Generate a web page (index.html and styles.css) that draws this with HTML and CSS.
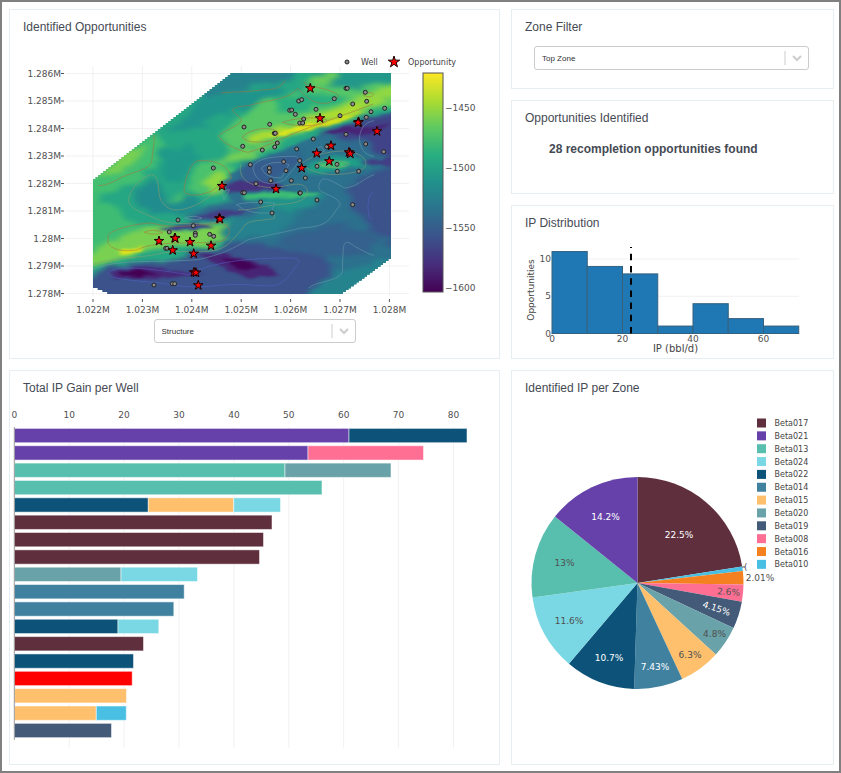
FILE: index.html
```html
<!DOCTYPE html>
<html lang="en">
<head>
<meta charset="utf-8">
<meta name="viewport" content="width=device-width, initial-scale=1">
<title>Recompletion Opportunities</title>
<link rel="stylesheet" href="styles.css">
</head>
<body>
<main class="dashboard">
  <div class="column column-wide">
    <section class="panel">
      <h2>Identified Opportunities</h2>
      <svg class="chart" viewBox="10 35 489 284" role="img" aria-label="Map of wells and opportunities">
        <defs>
          <linearGradient id="viridis" x1="0" y1="0" x2="0" y2="1">
            <stop offset="0" stop-color="#fde725"/><stop offset=".125" stop-color="#addc30"/>
            <stop offset=".25" stop-color="#5ec962"/><stop offset=".375" stop-color="#28ae80"/>
            <stop offset=".5" stop-color="#21918c"/><stop offset=".625" stop-color="#2c728e"/>
            <stop offset=".75" stop-color="#3b528b"/><stop offset=".875" stop-color="#472d7b"/>
            <stop offset="1" stop-color="#440154"/>
          </linearGradient>
          <clipPath id="survey"><path id="survey-edge" d=""/></clipPath>
          <filter id="soft" x="-20%" y="-50%" width="140%" height="200%" color-interpolation-filters="sRGB">
            <feTurbulence type="fractalNoise" baseFrequency=".012 .05" numOctaves="3" seed="4" result="n"/>
            <feDisplacementMap in="SourceGraphic" in2="n" scale="50" xChannelSelector="R" yChannelSelector="G"/>
            <feGaussianBlur stdDeviation="10 6"/>
          </filter>
          <filter id="crisp" x="-20%" y="-50%" width="140%" height="200%" color-interpolation-filters="sRGB">
            <feTurbulence type="fractalNoise" baseFrequency=".03 .08" numOctaves="2" seed="9" result="n"/>
            <feDisplacementMap in="SourceGraphic" in2="n" scale="16" xChannelSelector="R" yChannelSelector="G"/>
            <feGaussianBlur stdDeviation="6 3"/>
          </filter>
        </defs>
        <g id="map-grid" class="grid"></g>
        <g clip-path="url(#survey)">
          <g transform="translate(88 68) scale(.33333)">
            <path fill="#26a784" d="M0 0H920V700H0Z"/>
            <g filter="url(#soft)">
              <path fill="#26838e" d="M400 -30H650L620 35 480 60 340 90Z"/>
              <path fill="#1f948c" d="M330 95L480 65 610 60 560 95 440 130 300 190 240 190Z"/>
              <path fill="#43bf71" d="M0 330L200 190 240 250 150 340 60 370 0 420Z"/>
              <path fill="#77d052" d="M10 345L100 260 190 220 130 290 60 325Z"/>
              <path fill="#3fbc73" d="M-20 400L60 400 120 450 180 480 60 540 -20 560Z"/>
              <path fill="#218c8d" d="M130 380L200 330 230 390 330 395 350 430 180 440Z"/>
              <path fill="#1f9a8a" d="M210 250L300 230 340 270 280 350 230 340Z"/>
              <path fill="#4ac16d" d="M300 360L320 290 400 275 470 330 400 370 320 380Z"/>
              <path fill="#8fd744" d="M335 352L390 305 425 335 370 375Z"/>
              <path fill="#4cc26c" d="M230 400L310 380 280 415Z"/>
              <path fill="#56c667" d="M400 200L500 110 640 70 760 20 940 10V110L740 160 560 220 430 250Z"/>
              <path fill="#28ae80" d="M560 95L700 65 780 100 690 120 570 130Z"/>
              <path fill="#23988a" d="M640 -20L940 -20V45L790 58 700 50Z"/>
              <path fill="#6ccd5a" d="M630 45L730 5 760 20 680 60Z"/>
              <path fill="#90d743" d="M780 90L940 50V90L800 115Z"/>
              <path fill="#addc30" d="M470 205L600 175 700 130 880 95 790 140 600 200 490 226Z"/>
              <path fill="#72cf56" d="M350 275L480 245 600 210 500 260 440 290Z"/>
              <path fill="#7ad151" d="M40 540L160 480 300 480 440 475 430 520 320 540 220 530 100 570 -20 605V565Z"/>
            </g>
            <g filter="url(#crisp)">
              <path fill="#2c718e" d="M440 310L520 270 650 218 750 178 940 128V720H320L410 520 560 440 430 400 400 345Z"/>
              <path fill="#e2e41a" d="M530 210L600 183 700 157 640 190 570 207Z"/>
              <path fill="#d8e219" d="M640 182L740 150 840 130 740 168 660 190Z"/>
              <path fill="#e2e418" d="M95 545L165 535 155 555 95 562Z"/>
            </g>
            <g filter="url(#soft)">
              <path fill="#404387" d="M690 190L780 172 940 128V290L850 265 800 215Z"/>
              <path fill="#365c8d" d="M470 290L580 265 640 250 620 300 530 340 460 350Z"/>
              <path fill="#2f6b8e" d="M780 210L840 210 850 255 760 240Z"/>
              <path fill="#22938b" d="M490 385L600 375 680 375 720 390 640 430 480 450 390 460Z"/>
              <path fill="#1fa187" d="M655 295L720 265 820 280 860 298 760 310 660 315Z"/>
              <path fill="#3b528b" d="M780 350L940 280V540L850 480 800 420Z"/>
              <path fill="#26828e" d="M420 460L560 420 650 440 560 500 400 520Z"/>
              <path fill="#3b528b" d="M-20 640L60 590 200 590 350 545 500 530 650 550 740 590 680 710 -20 710Z"/>
              <path fill="#25838e" d="M640 710L700 630 900 570 940 600 770 710Z"/>
              <path fill="#31688e" d="M280 440L440 400 540 400 500 440 370 455Z"/>
              <path fill="#34618d" d="M560 520L720 470 880 500 840 560 720 570Z"/>
            </g>
            <g filter="url(#crisp)">
              <path fill="#482475" d="M690 198L760 176 850 178 910 166 850 198 780 198Z"/>
              <path fill="#463480" d="M410 352L460 338 560 343 600 360 480 370 420 374Z"/>
              <path fill="#3dbc74" d="M465 382L560 370 700 376 650 388 560 390 470 396Z"/>
              <path fill="#433e85" d="M340 440L400 425 490 428 420 447 300 455Z"/>
              <path fill="#404588" d="M200 482L330 463 380 480 250 489Z"/>
              <path fill="#482878" d="M65 610L170 594 250 608 350 618 200 634 80 632Z"/>
              <path fill="#440154" d="M90 612L150 605 220 618 150 626 100 624Z"/>
              <path fill="#482475" d="M330 558L400 556 470 575 550 598 570 624 480 630 420 606Z"/>
              <path fill="#440256" d="M400 570L470 578 515 600 450 603Z"/>
              <path fill="#433e85" d="M820 280L940 268V294L850 292Z"/>
              <path fill="#43bf71" d="M690 285L780 282 765 298 695 299Z"/>
            </g>
            <g class="contours">
              <g stroke="#a8743c">
                <path d="M30 353C70 352 90 330 120 320C160 305 190 300 192 275C195 240 200 225 198 200"/>
                <path d="M400 74C440 72 480 72 520 66C560 65 580 60 590 38"/>
                <path d="M651 41C640 55 700 55 740 74C765 80 740 100 716 106C670 110 650 80 629 61C600 95 560 92 480 113C450 115 420 120 440 135C450 145 470 155 455 165C430 185 400 190 392 205C400 220 440 245 480 253C530 240 600 200 660 180C740 150 800 130 855 108"/>
                <path d="M462 207C490 180 545 175 568 190C575 200 568 215 540 220C500 225 475 222 462 207Z"/>
                <path d="M582 163C620 150 680 145 715 155C720 165 700 170 660 173C620 175 600 168 582 163Z"/>
                <path d="M825 80C835 72 855 72 857 80C850 90 830 86 825 80Z"/>
                <path d="M288 370C290 330 310 280 330 278C380 275 420 290 430 328C420 350 390 350 370 370C330 385 300 385 288 370Z"/>
                <path d="M60 500C80 480 160 465 190 465C260 485 330 470 400 465C435 480 430 500 400 520C340 530 200 515 150 545C100 555 60 540 60 520Z"/>
                <path d="M168 493Q195 480 225 494Q195 503 168 493Z"/>
              </g>
              <g stroke="#8f9f70">
                <path d="M410 360C380 370 340 410 300 420C270 430 240 430 220 400C205 370 220 325 190 320C160 325 120 370 122 400C125 425 170 435 210 455C260 475 350 465 400 463"/>
                <path d="M15 590C60 570 150 570 200 560C280 540 330 560 390 545C430 530 440 505 465 480C475 450 540 460 560 450L560 440"/>
                <path d="M458 290C450 330 480 350 520 355C580 370 630 330 655 360C670 385 640 405 590 408C530 410 490 430 450 425"/>
                <path d="M640 290C660 265 730 245 780 250C840 260 850 295 810 310C750 325 690 325 640 290Z"/>
                <path d="M690 285C720 272 780 280 785 290C760 302 710 303 690 285Z"/>
              </g>
              <g stroke="#6e9eae">
                <path d="M15 605C80 572 200 585 330 575C400 560 440 540 480 515C500 510 600 490 640 480C720 475 720 460 757 410C750 380 690 380 692 355C700 320 715 330 770 360C800 360 830 330 858 320"/>
                <path d="M495 300C500 270 560 265 610 265C660 260 610 310 590 335C540 360 500 340 495 300Z"/>
                <path d="M520 300C540 280 580 280 603 290L580 330Q530 330 520 300Z"/>
                <path d="M858 158C800 165 800 260 858 265"/>
                <path d="M663 660C680 640 760 640 763 610L765 560C765 510 780 520 800 535C830 550 840 558 858 562"/>
                <path d="M290 450Q315 440 342 450Q315 460 290 450ZM398 370L425 365 408 395ZM445 410Q470 400 560 405L550 435Q480 440 445 410ZM680 245L700 235 710 250 690 255Z"/>
              </g>
              <g stroke="#5663c8">
                <path d="M60 615C80 590 180 600 300 620C360 590 440 570 600 570C640 570 640 580 620 600C580 660 560 655 500 652C400 640 350 670 250 650C160 635 70 640 60 615Z"/>
                <path d="M858 372C835 370 835 455 852 455"/>
              </g>
            </g>
          </g>
        </g>
        <g id="map-axes" class="tick-text"></g>
        <g id="wells" class="wells"></g>
        <g id="stars" class="stars"></g>
        <rect x="423" y="73" width="20" height="219" fill="url(#viridis)" stroke="#555"/>
      </svg>
      <label class="visually-hidden" for="surface">Map surface</label>
      <div class="select-wrap select-surface">
        <select id="surface"><option>Structure</option></select>
        <svg viewBox="0 0 24 24" aria-hidden="true"><path d="M1 5V19"/><path class="chevron" d="M9 10L13 14 17 10"/></svg>
      </div>
    </section>
    <section class="panel">
      <h2>Total IP Gain per Well</h2>
      <svg id="gain" class="chart" viewBox="10 396 489 368" role="img" aria-label="Total IP gain per well"></svg>
    </section>
  </div>
  <div class="column column-side">
    <section class="panel">
      <h2>Zone Filter</h2>
      <label class="visually-hidden" for="zone">Zone</label>
      <div class="select-wrap select-zone">
        <select id="zone"><option>Top Zone</option></select>
        <svg viewBox="0 0 24 24" aria-hidden="true"><path d="M1 5V19"/><path class="chevron" d="M9 10L13 14 17 10"/></svg>
      </div>
    </section>
    <section class="panel">
      <h2>Opportunities Identified</h2>
      <p class="found">28 recompletion opportunities found</p>
    </section>
    <section class="panel">
      <h2>IP Distribution</h2>
      <svg id="histogram" class="chart" viewBox="512 231 321 127" role="img" aria-label="IP distribution"></svg>
    </section>
    <section class="panel">
      <h2>Identified IP per Zone</h2>
      <svg id="zones" class="chart" viewBox="512 396 321 368" role="img" aria-label="Identified IP per zone"></svg>
    </section>
  </div>
</main>
<script src="script.js"></script>
</body>
</html>
```
FILE: styles.css
```css
* { box-sizing: border-box; }

body {
  margin: 0;
  min-height: 100vh;
  padding: 7px 5px 6px 7px;
  border: 2px solid #808080;
  background: #fff;
  color: #454a54;
  font-family: "Liberation Sans", Arial, sans-serif;
}

.dashboard {
  display: grid;
  grid-template-columns: minmax(0, 491fr) minmax(0, 323fr);
  gap: 11px;
}

.column { display: flex; flex-direction: column; gap: 11px; }

.panel {
  padding-top: 9px;
  border: 1px solid #e6eef2;
  background: #fff;
}

h2 {
  margin: 0;
  padding-left: 13px;
  font-size: 12px;
  font-weight: 400;
  line-height: 16px;
}

.found {
  margin: 15px 0 36px;
  padding-left: 37px;
  font-size: 12px;
  font-weight: 700;
  line-height: 16px;
}

.chart { display: block; width: 100%; height: auto; }

.select-wrap {
  display: flex;
  align-items: center;
  height: 24px;
  border: 1px solid #ccc;
  border-radius: 3px;
}
.select-surface { width: 202px; margin: 0 auto 15px; }
.select-zone { margin: 11px 24px 18px 22px; }

.select-wrap select {
  flex: 1;
  min-width: 0;
  height: 22px;
  margin-right: -24px;
  padding: 0 24px 0 7px;
  border: 0;
  appearance: none;
  background: transparent;
  color: #333;
  font: 8px "Liberation Sans", Arial, sans-serif;
}
.select-wrap svg {
  width: 24px;
  height: 24px;
  pointer-events: none;
  fill: none;
  stroke: #ccc;
}
.select-wrap .chevron { stroke-width: 2; }

.visually-hidden {
  position: absolute;
  width: 1px;
  height: 1px;
  overflow: hidden;
  clip-path: inset(50%);
}

.chart text { font-family: "DejaVu Sans", Verdana, sans-serif; fill: #505050; font-size: 9px; }
.chart .legend-text { font-size: 8px; fill: #444; }
.chart .axis-title { font-size: 10px; fill: #444; }
.chart .axis-title-side { font-size: 9px; fill: #444; }
.chart .on-dark { fill: #fff; }

.grid path { stroke: #f1f1f1; }
.contours { fill: none; stroke-width: 3; opacity: .55; }
.wells circle { fill: #8c8c8c; stroke: #222; stroke-width: 1; }
.stars path { fill: #f00; stroke: #1a0000; stroke-width: 1; }
```
FILE: script.js
```js
const NS = 'http://www.w3.org/2000/svg';
const byId = id => document.getElementById(id);

function add(parent, name, attrs, text) {
  const node = document.createElementNS(NS, name);
  for (const key in attrs) node.setAttribute(key, attrs[key]);
  if (text !== undefined) node.textContent = text;
  parent.appendChild(node);
  return node;
}

const ZONES = {
  Beta017: '#5f2f3e', Beta021: '#6541a9', Beta013: '#58bfaf', Beta024: '#79d8e4',
  Beta022: '#0d5379', Beta014: '#3f819f', Beta015: '#ffc06e', Beta020: '#69a2a8',
  Beta019: '#435a78', Beta008: '#ff6f94', Beta016: '#f58020', Beta010: '#49c0e3'
};

/* Map */
function stairs(x, y, x2, y2, n) {
  let d = '';
  const dx = (x2 - x) / n, dy = (y2 - y) / n;
  for (let i = 0; i < n; i++) d += dy * dx < 0 && dx > 0 ? `v${dy}h${dx}` : `h${dx}v${dy}`;
  return d;
}
byId('survey-edge').setAttribute('d',
  'M93 181' + stairs(93, 181, 233, 73, 54) + 'H391V259' +
  stairs(391, 259, 343, 294, 18) + 'H112' + stairs(112, 294, 93, 286, 4) + 'Z');

const grid = byId('map-grid'), axes = byId('map-axes');
['1.286M', '1.285M', '1.284M', '1.283M', '1.282M', '1.281M', '1.28M', '1.279M', '1.278M'].forEach((t, i) => {
  const y = 73.5 + i * 27.5;
  add(grid, 'path', { d: `M65 ${y}H409` });
  add(axes, 'path', { d: `M61 ${y}H64`, stroke: '#555' });
  add(axes, 'text', { x: 61, y: y + 3, 'text-anchor': 'end' }, t);
});
for (let i = 0; i < 7; i++) {
  const x = 93 + i * 49.4;
  add(grid, 'path', { d: `M${x} 66V296` });
  add(axes, 'path', { d: `M${x} 299V302`, stroke: '#555' });
  add(axes, 'text', { x, y: 313, 'text-anchor': 'middle' }, `1.02${i + 2}M`);
}
[1450, 1500, 1550, 1600].forEach((v, i) => add(axes, 'text', { x: 445, y: 111 + i * 60 }, '−' + v));

const wells = [
  [346,88.3],[347.3,88.3],[365.3,92.3],[366.7,101.3],[334.3,98.7],[352.7,104],[384.7,108.3],[371,111.7],
  [366.3,117.3],[340,115.7],[316,109.3],[298.7,101],[301.7,99.7],[289.7,110.3],[291.7,110],[295.3,114.3],
  [303.7,119],[299.7,123],[302.7,123],[269.7,124.3],[244,127],[274.3,133.3],[275.3,133.3],[277.3,143],
  [274.7,147],[262.3,150],[242.7,146.3],[296.7,149],[313.3,139],[346,134.3],[365.7,144],[383.7,151.7],
  [283.7,161.7],[299.7,160.7],[250.3,164.7],[269.3,168],[269.3,172],[286,170.7],[270.7,180.7],[291.3,180.7],
  [305.3,178],[317,166.3],[337,164.3],[337.3,171.3],[358.7,171.3],[326.7,146.7],[256,183.7],[299.7,193],
  [300.3,193],[242.7,192.7],[244.3,192.7],[317,200],[352.7,204.7],[272,213],[260.7,202],[213.3,168],
  [178,220],[193.3,225.7],[169.3,232],[195.3,233.3],[195.3,235.3],[209.7,234.3],[213.7,236.3],[165.7,248.3],
  [167,248.3],[154,285],[172.3,283.7],[174.7,283.7],[347,62]
];
wells.forEach(([cx, cy]) => add(byId('wells'), 'circle', { cx, cy, r: 2 }));

function star(x, y, r) {
  let d = '';
  for (let i = 0; i < 10; i++) {
    const q = i % 2 ? r * 0.38 : r, a = i * Math.PI / 5;
    d += `${i ? 'L' : 'M'}${x + q * Math.sin(a)} ${y - q * Math.cos(a)}`;
  }
  add(byId('stars'), 'path', { d: d + 'Z' });
}
[
  [310.3,88.3],[320,118.3],[358.7,122],[358,122.7],[377,131.3],[331,145.7],[316.7,153.3],[349,152.3],
  [350.3,153.7],[329.3,161.3],[301.7,168],[276,189],[222,186],[219.3,218.3],[220,219],[159,241],
  [174.7,238],[175.3,238.3],[190,242],[211,245.7],[172.7,250.3],[193.7,253.7],[194,272.3],[196,272.7],[198.3,285.3]
].forEach(([x, y]) => star(x, y, 5));
star(394, 62, 6);
add(axes, 'text', { x: 361, y: 65, class: 'legend-text' }, 'Well');
add(axes, 'text', { x: 408, y: 65, class: 'legend-text' }, 'Opportunity');

/* Gain per well: each bar is a list of [zone, running end position] */
const gain = byId('gain');
const gainGrid = add(gain, 'g', { class: 'grid' });
for (let i = 0; i < 9; i++) {
  const x = 14.3 + i * 54.9;
  if (i) add(gainGrid, 'path', { d: `M${x} 427V748` });
  add(gain, 'text', { x, y: 417.5, 'text-anchor': 'middle' }, i * 10);
}
[
  [['Beta021', 349], ['Beta022', 467]], [['Beta021', 308], ['Beta008', 423.5]],
  [['Beta013', 285], ['Beta020', 391]], [['Beta013', 322]],
  [['Beta022', 148.3], ['Beta015', 233.7], ['Beta024', 280.5]],
  [['Beta017', 272]], [['Beta017', 263.5]], [['Beta017', 259.5]],
  [['Beta020', 121], ['Beta024', 197.5]], [['Beta014', 184.2]], [['Beta014', 173.8]],
  [['Beta022', 118], ['Beta024', 158.8]], [['Beta017', 143.5]], [['Beta022', 133.5]],
  [['red', 132.2]], [['Beta015', 126.5]], [['Beta015', 96.3], ['Beta010', 126.3]], [['Beta019', 111.5]]
].forEach((bar, row) => {
  let x = 14.3;
  bar.forEach(([zone, end]) => {
    add(gain, 'rect', {
      x, y: 428.4 + row * 17.35, width: end - x, height: 14.3,
      fill: ZONES[zone] || '#f00', stroke: '#fff', 'stroke-opacity': .5
    });
    x = end;
  });
});
add(gain, 'path', { d: 'M14.3 427V740', stroke: '#999' });

/* Histogram */
const hist = byId('histogram');
const histGrid = add(hist, 'g', { class: 'grid' });
[0, 5, 10].forEach(v => {
  const y = 333.5 - v * 7.45;
  add(histGrid, 'path', { d: `M552 ${y}H799` });
  add(hist, 'text', { x: 551, y: y + 3, 'text-anchor': 'end' }, v);
});
[11, 9, 8, 1, 4, 2, 1].forEach((v, i) => add(hist, 'rect', {
  x: 552 + i * 35.25, y: 333.5 - v * 7.45, width: 35.25, height: v * 7.45,
  fill: '#1f77b4', stroke: '#35617f'
}));
[0, 20, 40, 60].forEach(v => add(hist, 'text', { x: 552 + v * 3.525, y: 342, 'text-anchor': 'middle' }, v));
add(hist, 'path', { d: 'M631 333.5V247', stroke: '#000', 'stroke-width': 2, 'stroke-dasharray': '6.5 5.7' });
add(hist, 'text', { x: 675.5, y: 352, 'text-anchor': 'middle', class: 'axis-title' }, 'IP (bbl/d)');
add(hist, 'text', { transform: 'translate(534 290) rotate(-90)', 'text-anchor': 'middle', class: 'axis-title-side' }, 'Opportunities');

/* Zone share, clockwise from twelve o'clock: zone, share, label, label x, label y, light text, rotation */
const pie = byId('zones');
let turn = 0;
const slices = [
  ['Beta017', 22.5, '22.5%', 679, 534.5, 1, 0], ['Beta010', .71, '', 0, 0, 0, 0],
  ['Beta016', 2.01, '2.01%', 760, 577.5, 0, 0], ['Beta008', 2.6, '2.6%', 728.5, 592, 0, 4],
  ['Beta019', 4.15, '4.15%', 716.5, 608.5, 1, 18], ['Beta020', 4.8, '4.8%', 714.5, 634, 0, 0],
  ['Beta015', 6.3, '6.3%', 690, 655, 0, 0], ['Beta014', 7.43, '7.43%', 655, 667, 1, 0],
  ['Beta022', 10.7, '10.7%', 609, 658, 1, 0], ['Beta024', 11.6, '11.6%', 569, 620.5, 0, 0],
  ['Beta013', 13, '13%', 564.5, 562.5, 0, 0], ['Beta021', 14.2, '14.2%', 605.5, 516.5, 1, 0]
];
const point = t => {
  const a = t / 100 * 2 * Math.PI;
  return `${637.5 + 106 * Math.sin(a)} ${583 - 106 * Math.cos(a)}`;
};
slices.forEach(([zone, share]) => {
  add(pie, 'path', {
    d: `M637.5 583L${point(turn)}A106 106 0 0 1 ${point(turn + share)}Z`, fill: ZONES[zone]
  });
  turn += share;
});
slices.forEach(([, , label, x, y, light, angle]) => {
  if (label) add(pie, 'text', {
    transform: `translate(${x} ${y}) rotate(${angle})`, y: 3, 'text-anchor': 'middle', class: light ? 'on-dark' : ''
  }, label);
});
add(pie, 'path', { d: 'M742 567H745', stroke: '#555' });
add(pie, 'text', { x: 744, y: 570 }, '(');
Object.keys(ZONES).forEach((zone, i) => {
  const y = 423 + i * 12.85;
  add(pie, 'rect', { x: 757, y: y - 4.5, width: 9, height: 9, fill: ZONES[zone] });
  add(pie, 'text', { x: 774.5, y: y + 3, class: 'legend-text' }, zone);
});
```
